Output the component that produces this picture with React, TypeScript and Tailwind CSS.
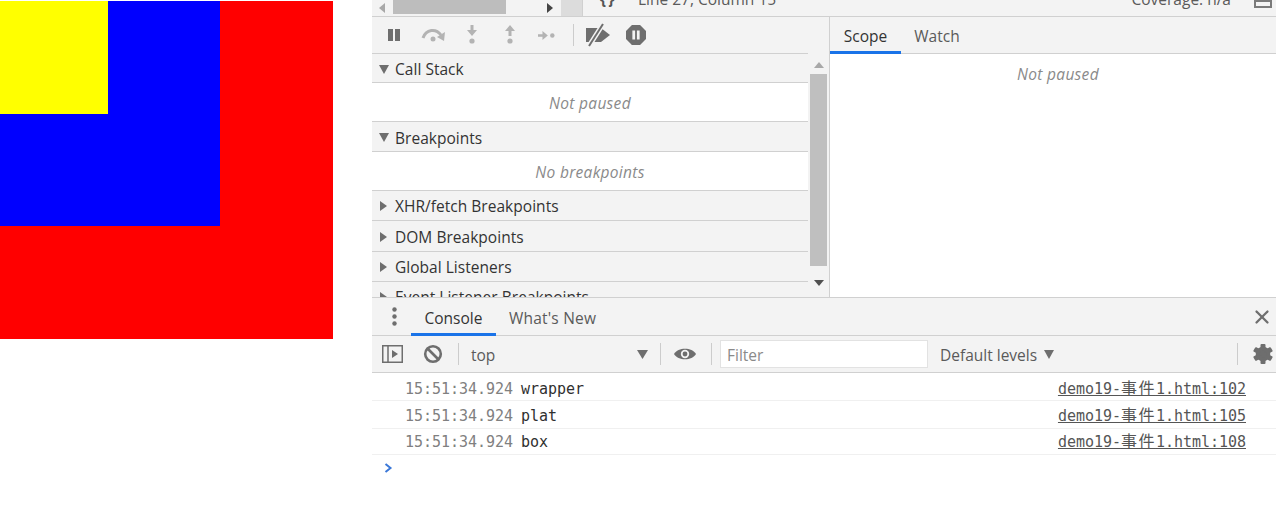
import { X } from "lucide-react";

const uiFont = "font-['Open_Sans','Noto_Sans_CJK_SC',sans-serif]";

function Triangle({ open }: { open: boolean }) {
    return (
        <span className="-mt-[2px] flex w-[23px] shrink-0 justify-center">
            {open ? (
                <svg width="10" height="9" viewBox="0 0 10 9"><path d="M0 0h10L5 9z" fill="#6e6e6e" /></svg>
            ) : (
                <svg width="7" height="10" viewBox="0 0 7 10"><path d="M0 0l7 5-7 5z" fill="#6e6e6e" /></svg>
            )}
        </span>
    );
}

function SectionHeader({ title, open, size }: { title: string; open: boolean; size: string }) {
    return (
        <div className={`flex shrink-0 items-center border-b border-[#d0d0d0] bg-[#f3f3f3] text-[15.5px] tracking-[0.03px] text-[#333] ${size}`}>
            <Triangle open={open} />
            <span>{title}</span>
        </div>
    );
}

function Placeholder({ text, size }: { text: string; size: string }) {
    return (
        <div className={`flex shrink-0 items-center justify-center border-b border-[#d0d0d0] bg-white text-[15.5px] italic tracking-[0.3px] text-[#8a8a8a] ${size}`}>
            {text}
        </div>
    );
}

function DebugToolbar() {
    return (
        <div className="flex h-[37px] shrink-0 items-center border-b border-[#d0d0d0] bg-[#f3f3f3] pl-[15px]">
            <svg width="14" height="12" viewBox="0 0 14 12"><path d="M1 0h5v12H1zM8 0h5v12H8z" fill="#6e6e6e" /></svg>
            <svg className="ml-[20px]" width="26" height="16" viewBox="0 0 26 16">
                <path d="M2 11C5 2 15 1 20 8" fill="none" stroke="#b3b3b3" strokeWidth="3" />
                <path d="M24 5l-1 9-7-4z" fill="#b3b3b3" />
                <circle cx="12" cy="12" r="2.5" fill="#b3b3b3" />
            </svg>
            <svg className="ml-[19px]" width="12" height="20" viewBox="0 0 12 20">
                <path d="M4.5 0h3v5H11l-5 6-5-6h3.500z" fill="#b3b3b3" />
                <circle cx="6" cy="16" r="2.600" fill="#b3b3b3" />
            </svg>
            <svg className="ml-[26px]" width="12" height="20" viewBox="0 0 12 20">
                <path d="M4.500 11h3V6H11L6 0 1 6h3.500z" fill="#b3b3b3" />
                <circle cx="6" cy="16" r="2.600" fill="#b3b3b3" />
            </svg>
            <svg className="ml-[22px]" width="17" height="11" viewBox="0 0 19 12">
                <path d="M0 4.500h5V1l6 5-6 5V7.500H0z" fill="#b3b3b3" />
                <circle cx="16" cy="6" r="2.500" fill="#b3b3b3" />
            </svg>
            <div className="ml-[18px] h-[22px] w-px bg-[#ccc]" />
            <svg className="ml-[11px]" width="26" height="24" viewBox="0 0 26 24">
                <path d="M1 5h15l9 7-9 7H1z" fill="#6e6e6e" />
                <path d="M18 1L4 23" stroke="#f3f3f3" strokeWidth="5" />
                <path d="M18 1L4 23" stroke="#6e6e6e" strokeWidth="2" />
            </svg>
            <svg className="ml-[15px]" width="20" height="20" viewBox="0 0 22 22">
                <path d="M6.500 0h9L22 6.500v9L15.500 22h-9L0 15.500v-9z" fill="#6e6e6e" />
                <path d="M7 6h3v10H7zM12 6h3v10h-3z" fill="#f3f3f3" />
            </svg>
        </div>
    );
}

function Gear() {
    return (
        <svg className="ml-[15px] mr-[3px]" width="20" height="20" viewBox="0 0 20 20">
            <g fill="#6e6e6e">
                <rect x="7.500" y="0" width="5" height="20" rx="1" />
                <rect x="7.500" y="0" width="5" height="20" rx="1" transform="rotate(60 10 10)" />
                <rect x="7.500" y="0" width="5" height="20" rx="1" transform="rotate(120 10 10)" />
            </g>
            <circle cx="10" cy="10" r="5.300" fill="none" stroke="#6e6e6e" strokeWidth="4" />
        </svg>
    );
}

function ConsoleRow({ time, msg, line, size }: { time: string; msg: string; line: number; size: string }) {
    return (
        <div className={`flex items-center justify-between border-b border-[#f0f0f0] pl-[33px] pr-[30px] font-['DejaVu_Sans_Mono','Noto_Sans_CJK_SC',monospace] text-[15px] tracking-[-0.03px] ${size}`}>
            <div className="flex">
                <span className="text-[#808080]">{time}</span>
                <span className="ml-[8px] text-[#303030]">{msg}</span>
            </div>
            <span className="text-[#555] underline">
                demo19-<span className="text-[16px] leading-none tracking-[1.5px]">事件</span>1.html:{line}
            </span>
        </div>
    );
}

export default function App() {
    return (
        <div className={`flex h-[530px] w-[1276px] overflow-hidden bg-white ${uiFont}`}>
            {/* nested boxes */}
            <div className="w-[372px] shrink-0 pt-px">
                <div className="h-[338px] w-[333px] bg-[#ff0000]">
                    <div className="h-[225px] w-[220px] bg-[#0000ff]">
                        <div className="h-[113px] w-[108px] bg-[#ffff00]" />
                    </div>
                </div>
            </div>

            <div className="flex w-[904px] flex-col">
                {/* cut off editor footer */}
                <div className="flex h-[17px] shrink-0 overflow-hidden border-b border-[#d0d0d0] bg-[#f3f3f3]">
                    <div className="flex h-full w-[189px] items-center">
                        <svg className="ml-[7px]" width="6" height="10" viewBox="0 0 6 10"><path d="M6 0v10L0 5z" fill="#a8a8a8" /></svg>
                        <div className="ml-[8px] h-[14px] w-[113px] self-start bg-[#bdbdbd]" />
                        <svg className="ml-[41px]" width="6" height="10" viewBox="0 0 6 10"><path d="M0 0v10l6-5z" fill="#444" /></svg>
                    </div>
                    <div className="h-full w-[21px] bg-[#dcdcdc]" />
                    <div className="h-full w-px bg-[#d0d0d0]" />
                    <div className="flex flex-1 justify-between pl-[17px] pr-[4px] text-[15.5px] text-[#5a5a5a]">
                        <div className="-mt-[12px] flex">
                            <span className="w-[16px] font-bold tracking-[-1px] text-[#555]">{"{ }"}</span>
                            <span className="ml-[22px]">Line 27, Column 15</span>
                        </div>
                        <div className="-mt-[12px] flex items-start">
                            <span>Coverage: n/a</span>
                            <div className="ml-[23px] mt-[2px] h-[18px] w-[18px] border-2 border-[#7a7a7a]">
                                <div className="mt-[8px] h-[2px] bg-[#7a7a7a]" />
                            </div>
                        </div>
                    </div>
                </div>

                {/* debugger */}
                <div className="flex h-[280px] shrink-0">
                    <div className="flex w-[436px] shrink-0 flex-col overflow-hidden">
                        <DebugToolbar />
                        <SectionHeader title="Call Stack" open size="h-[29px] pt-[4px]" />
                        <Placeholder text="Not paused" size="h-[39px] pt-[3px]" />
                        <SectionHeader title="Breakpoints" open size="h-[30px] pt-[4px]" />
                        <Placeholder text="No breakpoints" size="h-[39px] pt-[3px]" />
                        <SectionHeader title="XHR/fetch Breakpoints" open={false} size="h-[30px] pt-[2px]" />
                        <SectionHeader title="DOM Breakpoints" open={false} size="h-[31px] pt-[4px]" />
                        <SectionHeader title="Global Listeners" open={false} size="h-[30px] pt-[2px]" />
                        <SectionHeader title="Event Listener Breakpoints" open={false} size="h-[30px] pt-[2px]" />
                    </div>

                    <div className="flex w-[22px] shrink-0 flex-col border-r border-[#d0d0d0]">
                        <div className="h-[37px] shrink-0 bg-[#f3f3f3]" />
                        <div className="flex flex-1 flex-col items-center bg-[#f3f3f3]">
                            <svg className="mt-[8px]" width="10" height="6" viewBox="0 0 10 6"><path d="M0 6h10L5 0z" fill="#a8a8a8" /></svg>
                            <div className="mt-[6px] h-[192px] w-[17px] bg-[#bfbfbf]" />
                            <svg className="mt-[14px]" width="10" height="6" viewBox="0 0 10 6"><path d="M0 0h10L5 6z" fill="#505050" /></svg>
                        </div>
                    </div>

                    <div className="flex flex-1 flex-col">
                        <div className="flex h-[37px] shrink-0 border-b border-[#d0d0d0] bg-[#f3f3f3] text-[15.5px]">
                            <div className="flex h-[37px] w-[71px] items-center justify-center border-b-[3px] border-[#1a73e8] pt-[5px] text-[#333]">Scope</div>
                            <div className="flex h-[36px] w-[72px] items-center justify-center pt-[3px] text-[#5a5a5a]">Watch</div>
                        </div>
                        <div className="flex h-[41px] items-center justify-center bg-white pl-[10px] text-[15.5px] italic tracking-[0.3px] text-[#8a8a8a]">Not paused</div>
                    </div>
                </div>

                {/* console drawer */}
                <div className="flex h-[39px] shrink-0 items-center border-y border-[#d0d0d0] bg-[#f3f3f3] text-[15.5px]">
                    <svg className="ml-[20px]" width="5" height="19" viewBox="0 0 5 19">
                        <circle cx="2.500" cy="2.500" r="2.200" fill="#6e6e6e" />
                        <circle cx="2.500" cy="9.500" r="2.200" fill="#6e6e6e" />
                        <circle cx="2.500" cy="16.500" r="2.200" fill="#6e6e6e" />
                    </svg>
                    <div className="ml-[14px] flex h-[38px] w-[85px] items-center justify-center border-b-[3px] border-[#1a73e8] pt-[8px] text-[#333]">Console</div>
                    <div className="ml-[13px] mt-[4px] tracking-[0.2px] text-[#5a5a5a]">What's New</div>
                    <X className="ml-auto mr-[3px] text-[#6e6e6e]" size={22} strokeWidth={2.500} />
                </div>

                <div className="flex h-[37px] shrink-0 items-center border-b border-[#d0d0d0] bg-[#f3f3f3] text-[15.5px] text-[#5a5a5a]">
                    <svg className="ml-[10px]" width="21" height="18" viewBox="0 0 21 18">
                        <rect x="0.750" y="0.750" width="19.500" height="16.500" fill="none" stroke="#6e6e6e" strokeWidth="1.500" />
                        <path d="M6 1v16" stroke="#6e6e6e" strokeWidth="1.500" />
                        <path d="M10 5l6 4-6 4z" fill="#6e6e6e" />
                    </svg>
                    <svg className="ml-[20px]" width="20" height="20" viewBox="0 0 20 20">
                        <circle cx="10" cy="10" r="7.800" fill="none" stroke="#6e6e6e" strokeWidth="2.600" />
                        <path d="M4.500 4.500l11 11" stroke="#6e6e6e" strokeWidth="2.600" />
                    </svg>
                    <div className="ml-[15px] h-[22px] w-px bg-[#ccc]" />
                    <span className="ml-[12px] mt-[4px] w-[166px]">top</span>
                    <svg width="11" height="9" viewBox="0 0 11 9"><path d="M0 0h11L5.500 9z" fill="#6e6e6e" /></svg>
                    <div className="ml-[12px] h-[22px] w-px bg-[#ccc]" />
                    <svg className="ml-[13px]" width="22" height="14" viewBox="0 0 22 14">
                        <path d="M0 7C4 0 18 0 22 7 18 14 4 14 0 7z" fill="#6e6e6e" />
                        <circle cx="11" cy="7" r="4.200" fill="#f3f3f3" />
                        <circle cx="11" cy="7" r="2.400" fill="#6e6e6e" />
                    </svg>
                    <div className="ml-[15px] h-[22px] w-px bg-[#ccc]" />
                    <div className="ml-[8px] flex h-[28px] w-[208px] items-center border border-[#e2e2e2] bg-white pl-[6px] pt-[4px] text-[#8a8a8a]">Filter</div>
                    <span className="ml-[12px] mt-[4px]">Default levels</span>
                    <svg className="ml-[7px]" width="10" height="9" viewBox="0 0 10 9"><path d="M0 0h10L5 9z" fill="#6e6e6e" /></svg>
                    <div className="ml-auto h-[22px] w-px bg-[#ccc]" />
                    <Gear />
                </div>

                {/* console messages */}
                <ConsoleRow time="15:51:34.924" msg="wrapper" line={102} size="h-[28px] pt-[5px]" />
                <ConsoleRow time="15:51:34.924" msg="plat" line={105} size="h-[28px] pt-[4px]" />
                <ConsoleRow time="15:51:34.924" msg="box" line={108} size="h-[26px] pt-[2px]" />
                <svg className="ml-[12px] mt-[8px]" width="9" height="10" viewBox="0 0 9 10">
                    <path d="M1.500 1l5 4-5 4" fill="none" stroke="#3b78d8" strokeWidth="2" />
                </svg>
            </div>
        </div>
    );
}
